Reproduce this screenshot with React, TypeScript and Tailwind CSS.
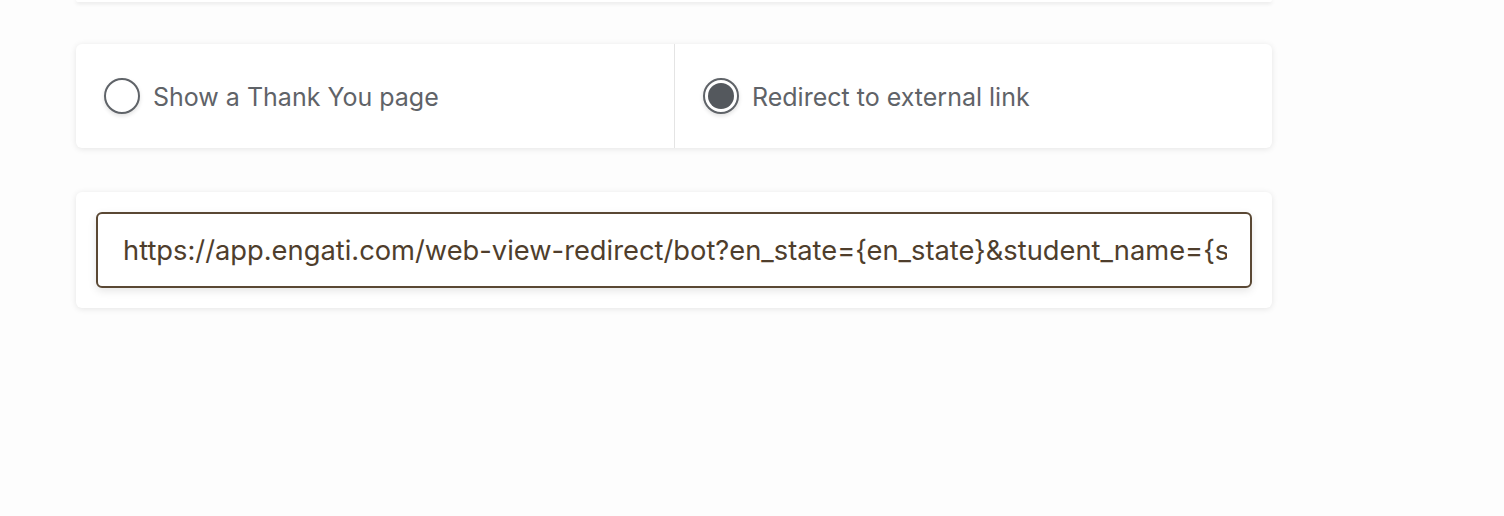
import React from "react";

const font = { fontFamily: '"Helvetica Neue", Inter, "Liberation Sans", sans-serif' };

const Radio: React.FC<{ checked?: boolean; label: string }> = ({ checked, label }) => (
  <label className="flex items-center gap-[13px] cursor-pointer">
    <span className="flex h-[36px] w-[36px] items-center justify-center rounded-full border-2 border-[#5f6368] bg-white shadow-[0_2px_4px_rgba(0,0,0,0.12)]">
      {checked && <span className="h-[26px] w-[26px] rounded-full bg-[#54585d]"></span>}
    </span>
    <span className="pt-[4px] text-[25px] text-[#5f6368]">{label}</span>
  </label>
);

export default function App() {
  return (
    <div className="min-h-[516px] w-full bg-[#fdfdfd] px-[76px]" style={font}>
      <div className="flex w-[1196px] flex-col gap-[42px]">
        {/* tail of the card above */}
        <div className="h-[2px] rounded-b-md bg-white shadow-[0_1px_4px_rgba(0,0,0,0.16)]"></div>

        {/* completion action */}
        <div className="flex h-[104px] rounded-md bg-white shadow-[0_1px_6px_rgba(0,0,0,0.1)]">
          <div className="flex w-[599px] items-center border-r border-[#e4e4e4] pl-[28px]">
            <Radio label="Show a Thank You page" />
          </div>
          <div className="flex flex-1 items-center pl-[28px]">
            <Radio checked label="Redirect to external link" />
          </div>
        </div>

        {/* redirect url */}
        <div className="mt-[2px] rounded-md bg-white p-[20px] shadow-[0_1px_6px_rgba(0,0,0,0.1)]">
          <input
            type="text"
            readOnly
            value="https://app.engati.com/web-view-redirect/bot?en_state={en_state}&student_name={student_name}"
            className="h-[76px] w-full rounded-[6px] border-2 border-[#5a4834] bg-white pl-[25px] pr-[23px] text-[27.3px] text-[#4f3e2c] outline-none shadow-[0_3px_8px_rgba(0,0,0,0.1)]"
            style={font}
          />
        </div>
      </div>
    </div>
  );
}
